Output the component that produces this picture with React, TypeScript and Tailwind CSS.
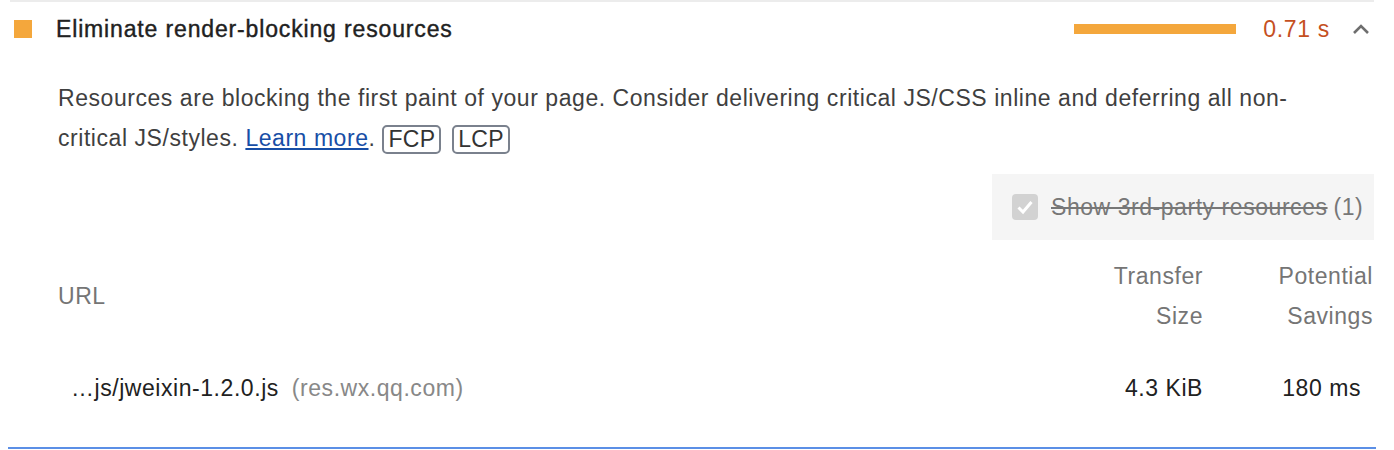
import { FC } from 'react';

const Chevron: FC = () => (
  <svg width="18" height="12" viewBox="0 0 18 12" className="block">
    <polyline
      points="2,10 9,3 16,10"
      fill="none"
      stroke="#6e6e6e"
      strokeWidth="2.6"
    />
  </svg>
);

const Check: FC = () => (
  <svg width="26" height="26" viewBox="0 0 26 26" className="block">
    <rect width="26" height="26" rx="4" fill="#d2d2d2" />
    <polyline
      points="6.5,13.5 11,18 19.5,8"
      fill="none"
      stroke="#ffffff"
      strokeWidth="3"
    />
  </svg>
);

const Badge: FC<{ label: string }> = ({ label }) => (
  <span className="inline-block border-2 border-[#7a818d] rounded-[5px] px-[4px] leading-[25px] tracking-[0.3px] text-[#333] align-middle">
    {label}
  </span>
);

export default function App() {
  return (
    <div className="w-[1394px] h-[450px] bg-white pl-[10px] pr-[20px] font-['Liberation_Sans',Arial,sans-serif] text-[23px] tracking-[0.55px] overflow-hidden">
      <div className="border-t-2 border-[#ececec]">
        <div className="h-[54px] flex items-center">
          <div className="ml-[4px] w-[18px] h-[18px] bg-[#f4a73c]" />
          <div className="ml-[24px] text-[#212121] tracking-[0.85px] [-webkit-text-stroke:0.4px_#212121] flex-1">
            Eliminate render-blocking resources
          </div>
          <div className="w-[162px] h-[10px] bg-[#f4a73c]" />
          <div className="ml-[27px] text-[#c5501f] tracking-[0.7px]">0.71 s</div>
          <div className="ml-[22px] mr-[4px]">
            <Chevron />
          </div>
        </div>

        <p className="mt-[22px] pl-[48px] pr-[40px] leading-[40px] text-[#3f3f3f]">
          Resources are blocking the first paint of your page. Consider delivering critical JS/CSS inline and deferring all non-critical JS/styles.{' '}
          <a href="#" className="text-[#174ea6] underline underline-offset-2">
            Learn more
          </a>
          . <Badge label="FCP" /> <span className="ml-[4px]" />
          <Badge label="LCP" />
        </p>

        <div className="mt-[16px] ml-auto w-[382px] h-[66px] bg-[#f5f5f5] flex items-center pl-[20px] text-[#777] whitespace-nowrap">
          <Check />
          <span className="ml-[13px] line-through">Show 3rd-party resources</span>
          <span className="ml-[6px]">(1)</span>
        </div>

        <div className="mt-[16px] flex items-center text-[#757575] leading-[40px]">
          <div className="flex-1 pl-[48px]">URL</div>
          <div className="w-[160px] text-right">
            Transfer
            <br />
            Size
          </div>
          <div className="w-[171px] text-right pr-[1px]">
            Potential
            <br />
            Savings
          </div>
        </div>

        <div className="h-[104px] flex items-center text-[#212121]">
          <div className="flex-1 pl-[61px]">
            …js/jweixin-1.2.0.js
            <span className="ml-[13px] text-[#888]">(res.wx.qq.com)</span>
          </div>
          <div className="w-[160px] text-right">4.3 KiB</div>
          <div className="w-[171px] text-right pr-[13px]">180 ms</div>
        </div>

        <div className="mt-[7px] -mx-[2px] h-[2px] bg-[#5b8fe6]" />
      </div>
    </div>
  );
}
